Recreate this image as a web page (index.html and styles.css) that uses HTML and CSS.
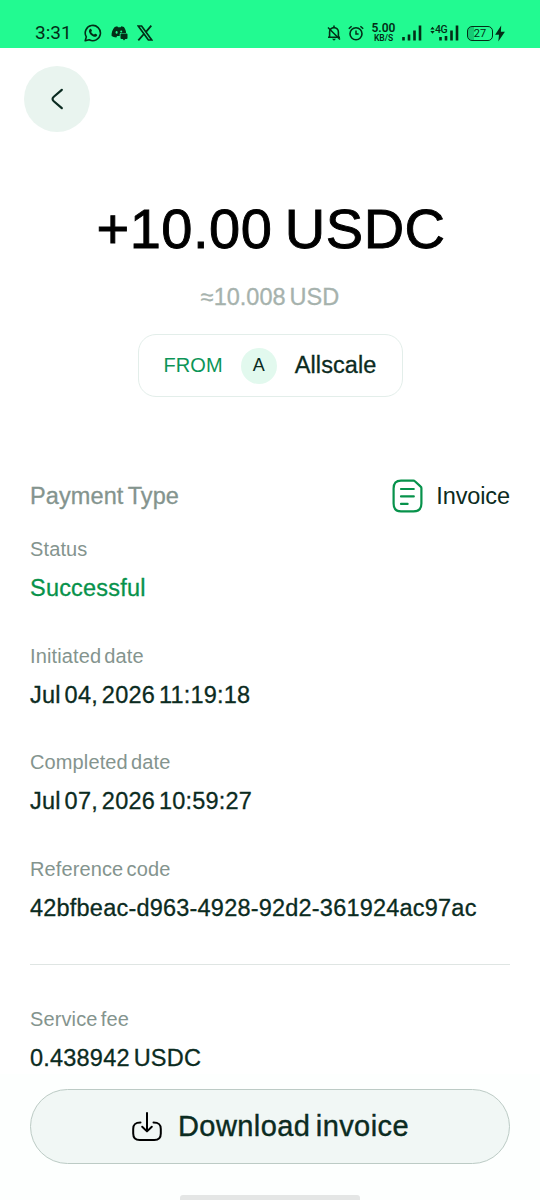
FILE: index.html
```html
<!DOCTYPE html>
<html lang="en">
<head>
<meta charset="utf-8">
<meta name="viewport" content="width=device-width, initial-scale=1">
<title>Payment details</title>
<link rel="stylesheet" href="styles.css">
</head>
<body>
<div class="screen">
  <header class="statusbar">
    <div class="status-left">
      <span class="clock">3:31</span>
      <svg class="ic-whatsapp" width="18" height="18" viewBox="0 0 18 18"><path d="M1.2 16.8 2.3 12.9A7.6 7.6 0 1 1 5.2 15.7Z" fill="none" stroke="currentColor" stroke-width="1.6" stroke-linejoin="round"/><path d="M5.7 5.2c.5-.7 1.3-.6 1.6.1l.6 1.3c.1.3 0 .6-.7 1.3.7 1.3 1.6 2.1 2.9 2.7.8-1 1-1 1.4-.8l1.4.7c.4.2.4.5.2 1.1-.5 1.2-1.9 1.5-3.2 1.1C7.3 11.8 5 9.3 4.9 7.2c0-.8.3-1.5.8-2Z" fill="currentColor"/></svg>
      <svg class="ic-discord" width="17" height="15" viewBox="0 0 17 15"><path d="M3.7 1 6.2.2l.8 1h2.600l.8-1 2.500.8c1.300 1.800 2.200 4 2.200 6H10c-.8 0-1.300.5-1.300 1.300v1.600H6.100l-.8 1.500C3.400 11.200 2 10.900.6 10.100.2 7 1.500 3.400 3.700 1Z" fill="currentColor"/><ellipse cx="5.600" cy="6.400" rx="1" ry="1.300" fill="#22fa91"/><ellipse cx="10.200" cy="5.500" rx="1" ry=".9" fill="#22fa91"/><path d="M10.500 7.600h5q1 0 1 1V12q0 1-1 1H14.300l-1.300 1.600L11.800 13h-1.300q-1 0-1-1V8.600q0-1 1-1Z" fill="currentColor"/></svg>
      <svg class="ic-x" width="16" height="16" viewBox="0 0 16 16"><path d="M1.200 1h3.400l10.200 14h-3.400Z" fill="none" stroke="currentColor" stroke-width="1.700"/><path d="M14.300.7 9 6.900M6.900 9 1.300 15.300" stroke="currentColor" stroke-width="1.800"/></svg>
    </div>
    <div class="status-right">
      <svg class="ic-bell" width="14" height="16" viewBox="0 0 14 16"><path d="M2.600 12V7a4.400 4.400 0 0 1 8.800 0v5M1 12.200h12M7 .6v2" fill="none" stroke="currentColor" stroke-width="1.600"/><path d="M5 13.800h4L7 15.800Z" fill="currentColor"/><path d="m1 2.500 12 12" stroke="currentColor" stroke-width="1.500"/></svg>
      <svg class="ic-alarm" width="16" height="16" viewBox="0 0 16 16"><circle cx="8" cy="8.800" r="6" fill="none" stroke="currentColor" stroke-width="1.600"/><path d="M8 5.500v3.600h2.600M.8 3.700 3.600 1.200M15.200 3.700l-2.800-2.500" fill="none" stroke="currentColor" stroke-width="1.500"/></svg>
      <div class="speed"><b>5.00</b><span>KB/S</span></div>
      <svg class="ic-signal" width="20" height="16" viewBox="0 0 20 16"><path d="M1.500 15.500V12M7 15.500V9.500M12.500 15.500V5.500M18 15.500V.5" stroke="currentColor" stroke-width="2.600"/></svg>
      <div class="mobile">
        <svg width="29" height="16" viewBox="0 0 29 16"><path d="M.3 4.400 2.500 1.700 4.700 4.400ZM.3 6 2.500 8.700 4.700 6Z" fill="currentColor"/><path d="M10.500 15.500V12M16 15.500V11M21.500 15.500V5.500M27 15.500V.5" stroke="currentColor" stroke-width="2.600"/></svg>
        <span class="net">4G</span>
      </div>
      <div class="battery"><span>27</span></div>
      <svg class="ic-bolt" width="10" height="17" viewBox="0 0 10 17"><path d="M6.200.5.1 9.800h3.900L3.300 16.500 9.900 6.700H5.900Z" fill="currentColor"/></svg>
    </div>
  </header>

  <nav class="topbar">
    <button class="back" aria-label="Back">
      <svg width="14" height="22" viewBox="0 0 14 22"><path d="M11.800 1.800 3.800 8.700Q1.300 11 3.800 13.300L11.800 20.200" fill="none" stroke="currentColor" stroke-width="2.200" stroke-linecap="round"/></svg>
    </button>
  </nav>

  <section class="summary">
    <h1 class="amount">+10.00 USDC</h1>
    <p class="fiat">≈10.008 USD</p>
    <div class="sender"><span class="from">FROM</span><span class="avatar">A</span><span class="name">Allscale</span></div>
  </section>

  <main class="details">
    <div class="type-row">
      <span class="type-label">Payment Type</span>
      <span class="type-value">
        <svg width="31" height="34" viewBox="0 0 31 34"><path d="M9 1.600h12.500q.8 0 1.400.6L28.700 7.600q.7.600.7 1.600v15.300q0 7.900-7.900 7.900H9q-7.400 0-7.400-7.900V9.500q0-7.900 7.400-7.900Z" fill="none" stroke="currentColor" stroke-width="2.200" stroke-linejoin="round"/><path d="M9 10h12.800M9 17.400h12.800M9 24.900h6.600" stroke="currentColor" stroke-width="2.200" stroke-linecap="round"/></svg>
        <span class="invoice">Invoice</span>
      </span>
    </div>
    <div class="field"><span class="label">Status</span><span class="value success">Successful</span></div>
    <div class="field"><span class="label">Initiated date</span><span class="value">Jul 04, 2026 11:19:18</span></div>
    <div class="field"><span class="label">Completed date</span><span class="value">Jul 07, 2026 10:59:27</span></div>
    <div class="field"><span class="label">Reference code</span><span class="value">42bfbeac-d963-4928-92d2-361924ac97ac</span></div>
    <hr class="divider">
    <div class="field"><span class="label">Service fee</span><span class="value">0.438942 USDC</span></div>
  </main>

  <footer class="footer">
    <button class="download">
      <svg width="32" height="32" viewBox="0 0 32 32"><path d="M9.500 11.500C4 11.500 2.200 13.500 2.200 18v4.500q0 6.500 6.500 6.500h14.600q6.500 0 6.500-6.500V18c0-4.500-1.800-6.500-7.300-6.500M16 2v18M11.200 15.800l4.800 4.600 4.800-4.600" fill="none" stroke="#000" stroke-width="2" stroke-linecap="round" stroke-linejoin="round"/></svg>
      <span>Download invoice</span>
    </button>
    <div class="home-indicator"></div>
  </footer>
</div>
</body>
</html>
```
FILE: styles.css
```css
* { box-sizing: border-box; }
body { margin: 0; background: #fff; }
.screen {
  width: 540px; height: 1200px; overflow: hidden;
  display: flex; flex-direction: column;
  font-family: "Liberation Sans", Arial, sans-serif;
  color: #0b2b21; background: #fff;
}
h1, p { margin: 0; font-weight: 400; }
button { font: inherit; color: inherit; padding: 0; border: 0; }
svg { display: block; flex: none; }

.statusbar {
  height: 48px; flex: none; background: #22fa91; color: #043a1d;
  display: flex; justify-content: space-between; align-items: flex-end;
  padding: 0 35px 6px 35px; font-family: Roboto, sans-serif;
}
.status-left, .status-right { display: flex; align-items: center; height: 18px; }
.status-left, .status-right { color: #032e17; }
.clock { font-size: 19px; line-height: 18px; letter-spacing: 0; width: 49px; }
.ic-discord { margin-left: 9px; }
.ic-x { margin-left: 9px; }
.ic-alarm { margin-left: 7px; }
.speed { display: flex; flex-direction: column; align-items: center; width: 25px; margin-left: 7px; }
.speed b { font-size: 12px; line-height: 12px; font-weight: 600; }
.speed span { font-size: 8.5px; line-height: 10px; margin-top: -2px; font-weight: 600; }
.speed b { margin-top: -1px; margin-bottom: 1px; }
.ic-signal { margin-left: 6px; }
.mobile { position: relative; margin-left: 8px; }
.net { position: absolute; left: 5px; top: -1px; font-size: 10.5px; line-height: 12px; font-weight: 500; background: #22fa91; letter-spacing: -.5px; }
.battery {
  width: 26px; height: 15px; margin-left: 8px; border: 1.5px solid; border-radius: 5px;
  font-size: 11px; line-height: 13px; text-align: center;
  background: linear-gradient(90deg, #15ca74 27%, transparent 27%);
}
.ic-bolt { margin-left: 2px; }

.topbar { height: 84px; flex: none; padding: 18px 24px 0; }
.back {
  width: 66px; height: 66px; border-radius: 50%; background: #e9f4ef;
  display: flex; align-items: center; justify-content: center;
}

.summary { display: flex; flex-direction: column; align-items: center; padding-top: 63px; flex: none; }
.amount { font-size: 56px; line-height: 68px; color: #000; -webkit-text-stroke: .9px; white-space: nowrap; letter-spacing: .5px; word-spacing: -3.5px; padding-left: 2px; }
.fiat { font-size: 23.5px; line-height: 30px; margin-top: 19px; color: #a6b2ad; -webkit-text-stroke: .3px; word-spacing: -2.5px; }
.sender {
  width: 265px; height: 63px; margin-top: 22px; padding: 0 25px;
  border: 1.5px solid #e3eeea; border-radius: 18px;
  display: flex; align-items: center; justify-content: space-between;
}
.from { font-size: 20px; color: #0c9558; letter-spacing: .1px; }
.avatar { width: 36px; height: 36px; border-radius: 50%; background: #e2f9ee; text-align: center; font-size: 18px; line-height: 35px; }
.name { font-size: 23.5px; letter-spacing: .1px; -webkit-text-stroke: .3px; }

.details { flex: 1; min-height: 0; padding: 79px 30px 0; display: flex; flex-direction: column; }
.type-row { height: 40px; flex: none; margin-bottom: 18px; display: flex; align-items: center; justify-content: space-between; }
.type-label { font-size: 23.5px; color: #84948e; -webkit-text-stroke: .3px; letter-spacing: .1px; word-spacing: -2px; }
.type-value { display: flex; align-items: center; gap: 13px; color: #07924b; }
.invoice { font-size: 23.5px; color: #0b2b21; letter-spacing: -.1px; }
.field { display: flex; flex-direction: column; gap: 9px; height: 70px; margin-bottom: 36.5px; flex: none; }
.field:last-child { margin-bottom: 0; }
.label { font-size: 20px; line-height: 30px; color: #84948e; letter-spacing: .12px; word-spacing: -2.5px; }
.value { font-size: 23.5px; line-height: 31px; white-space: nowrap; -webkit-text-stroke: .3px; letter-spacing: .21px; word-spacing: -2.8px; }
.success { color: #07924b; }
.divider { width: 100%; height: 1px; margin: 4px 0 39px; border: 0; background: #dfe5e3; flex: none; }

.footer { height: 126px; flex: none; padding: 15px 30px 0; background: #fdfffe; display: flex; flex-direction: column; align-items: center; }
.download {
  width: 480px; height: 75px; border: 1.5px solid #bccbc5; border-radius: 38px; background: #f1f7f5;
  display: flex; align-items: center; justify-content: center; gap: 15px;
  font-size: 29px; -webkit-text-stroke: .4px; letter-spacing: .42px; word-spacing: -3px; flex: none;
}
.home-indicator { width: 180px; height: 10px; margin-top: 31px; border-radius: 3px; background: #e4e6e5; flex: none; }
```
